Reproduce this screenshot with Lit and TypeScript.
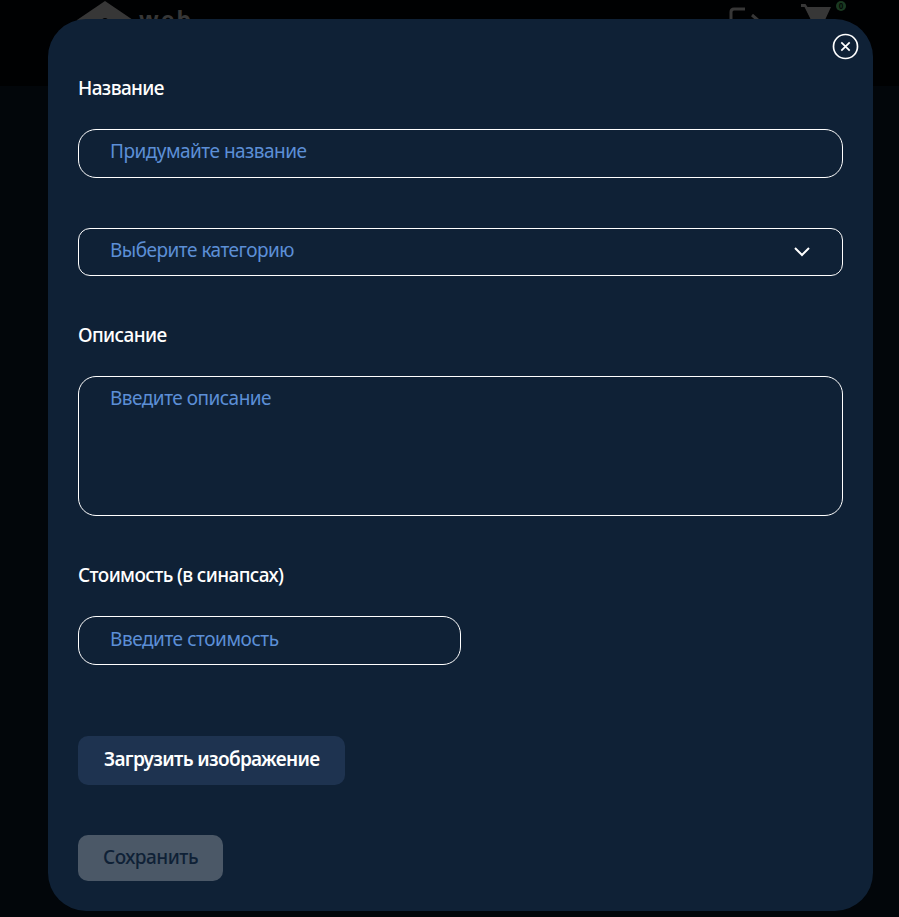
import { LitElement, html, css } from "lit";
import { customElement } from "lit/decorators.js";

@customElement("app-root")
export class AppRoot extends LitElement {
  static styles = css`
    :host { display: block; font-family: "Noto Sans", "Open Sans", sans-serif; font-size: 19px; line-height: 24px; color: #fff; }
    * { box-sizing: border-box; }
    .page { position: relative; height: 917px; overflow: hidden; background: #02060a; }
    .top { height: 86px; background: #000102; display: flex; justify-content: space-between; align-items: flex-start; padding: 0 53px 0 77px; }
    .brand { display: flex; gap: 6px; color: #373737; }
    .web { font-weight: 700; font-size: 23px; line-height: 30px; letter-spacing: 2px; padding-top: 4px; }
    .tools { display: flex; color: #373737; }
    .count { width: 10px; height: 10px; border-radius: 50%; margin: 1px 0 0 3px; background: #1a3a22; color: #050a06; font-size: 8px; line-height: 10px; font-weight: 700; text-align: center; }
    .exit { margin-right: 38px; }
    .modal { position: absolute; left: 48px; top: 19px; width: 825px; height: 892px; border-radius: 38px; background: #0f2136; padding: 57px 30px 0; display: flex; flex-direction: column; align-items: flex-start; }
    .close { position: absolute; right: 14px; top: 14px; width: 27px; height: 27px; padding: 0; border: 0; background: none; color: #fff; }
    .close svg { display: block; }
    .label { font-weight: 500; letter-spacing: -0.62px; white-space: nowrap; }
    .field { width: 765px; height: 49px; border: 1px solid #fff; border-radius: 18px; padding: 9px 32px 9px 31px; color: #5c8fd6; letter-spacing: -0.51px; margin-top: 29px; white-space: nowrap; }
    .select { height: 48px; border-radius: 12px; margin-top: 50px; display: flex; justify-content: space-between; }
    .area { height: 140px; }
    .cost { width: 383px; padding-top: 10px; letter-spacing: -0.45px; }
    .gap { margin-top: 47px; }
    .btn { font: inherit; border: 0; border-radius: 10px; text-align: left; white-space: nowrap; padding: 0 25px 3px; }
    .upload { width: 267px; height: 49px; margin-top: 71px; padding-left: 26px; background: #1e3350; color: #fff; font-weight: 600; letter-spacing: -0.66px; }
    .save { width: 145px; height: 46px; margin-top: 50px; background: #4b5867; color: #0f2136; font-weight: 500; letter-spacing: -0.5px; }
  `;

  render() {
    return html`
      <div class="page">
        <div class="top">
          <div class="brand">
            <svg width="56" height="30" viewBox="0 0 56 30"><path d="M28 1 56 20V30H0V20Z" fill="currentColor"/><circle cx="28" cy="21" r="3" fill="#000102"/></svg>
            <span class="web">web</span>
          </div>
          <div class="tools">
            <svg class="exit" width="34" height="36" viewBox="0 0 34 36" fill="none" stroke="currentColor" stroke-width="3"><path d="M18 9H7Q4 9 4 12V32H18M25 15 32 21 25 27M12 21H31"/></svg>
            <svg width="34" height="36" viewBox="0 0 34 36"><path d="M2 4H6.500L8.500 7H32L26 20H12L5.500 7H2Z" fill="currentColor"/></svg>
            <span class="count">0</span>
          </div>
        </div>
        <div class="modal">
          <button class="close" aria-label="Закрыть">
            <svg width="27" height="27" viewBox="0 0 27 27" fill="none" stroke="currentColor"><circle cx="13.5" cy="13.5" r="12" stroke-width="1.7"/><path d="m9.300 9.300 8.400 8.400m0-8.400-8.400 8.400" stroke-width="1.7"/></svg>
          </button>
          <span class="label">Название</span>
          <div class="field">Придумайте название</div>
          <div class="field select"><span>Выберите категорию</span><svg width="17" height="26" viewBox="0 0 17 26" fill="none" stroke="#fff" stroke-width="2"><path d="m2 10 7 7 7-7"/></svg></div>
          <span class="label gap">Описание</span>
          <div class="field area">Введите описание</div>
          <span class="label gap">Стоимость (в синапсах)</span>
          <div class="field cost">Введите стоимость</div>
          <button class="btn upload">Загрузить изображение</button>
          <button class="btn save">Сохранить</button>
        </div>
      </div>`;
  }
}
